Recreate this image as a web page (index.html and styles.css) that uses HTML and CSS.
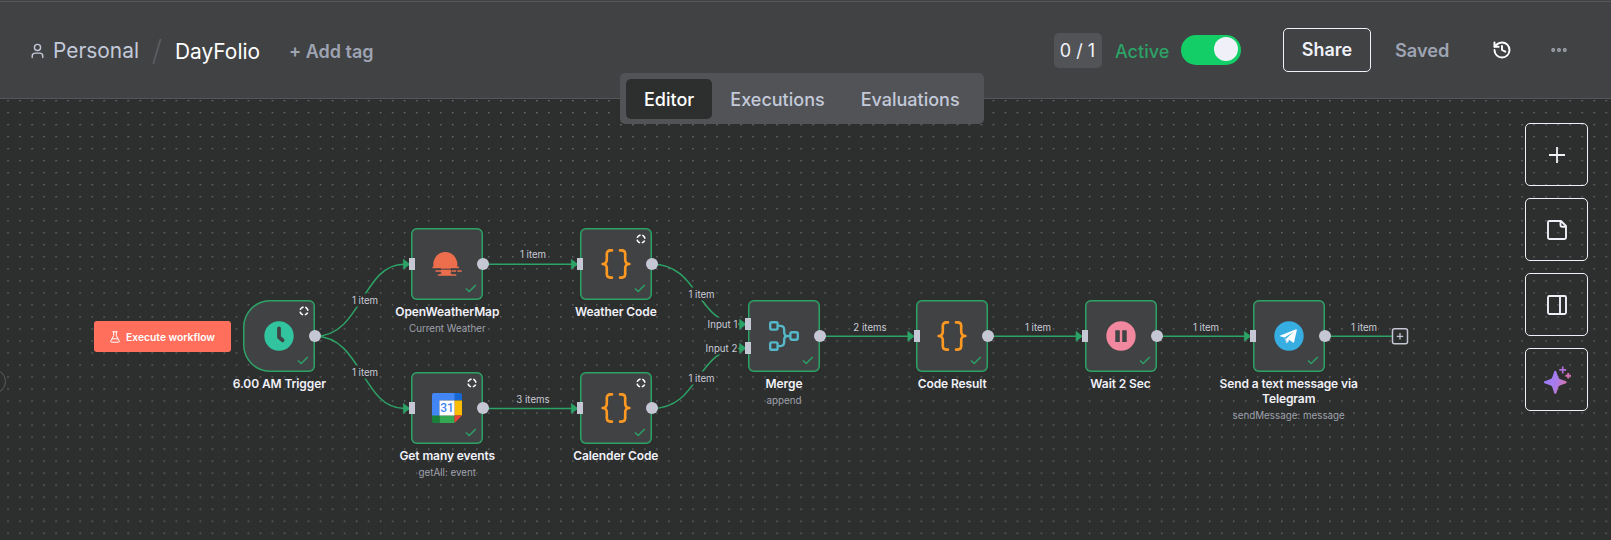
FILE: index.html
```html
<!DOCTYPE html>
<html lang="en">
<head>
<meta charset="utf-8">
<title>DayFolio</title>
<link rel="stylesheet" href="styles.css">
</head>
<body>
<svg class="defs" width="0" height="0">
  <defs>
    <symbol id="check" viewBox="0 0 12 9"><path d="M1 4.6 4.2 7.6 10.8 1" fill="none" stroke="#2ca266" stroke-width="1.4"/></symbol>
    <symbol id="pin" viewBox="0 0 10 10"><circle cx="5" cy="5" r="3.9" fill="none" stroke="#fff" stroke-width="1.6" stroke-dasharray="4.5 1.626" stroke-dashoffset="2.25" transform="rotate(45 5 5)"/></symbol>
    <symbol id="braces" viewBox="0 0 30 30"><g fill="none" stroke="#ff9922" stroke-width="2.6" stroke-linecap="round" stroke-linejoin="round"><path d="M11 1.4H9.4Q5.8 1.4 5.8 5v5.6Q5.8 15 1.6 15q4.2 0 4.2 4.4V25q0 3.600 3.600 3.600H11"/><path d="M19 1.400h1.600q3.600 0 3.600 3.600v5.600q0 4.400 4.200 4.400-4.200 0-4.200 4.400V25q0 3.600-3.600 3.600H19"/></g></symbol>
  </defs>
</svg>
<div class="app">
  <header class="header">
    <div class="crumbs">
      <svg class="user" viewBox="0 0 14 16"><g fill="none" stroke="#c3c9d9" stroke-width="1.5" stroke-linecap="round"><circle cx="7" cy="4.200" r="3.300"/><path d="M1.300 15v-1.400q0-3.300 3.400-3.300h4.600q3.400 0 3.400 3.300V15"/></g></svg>
      <span class="project">Personal</span>
      <svg class="slash" viewBox="0 0 10 27"><path d="M1.200 26 8.600 1" stroke="#5b5c60" stroke-width="1.800"/></svg>
      <span class="name">DayFolio</span>
      <span class="add-tag">+ Add tag</span>
    </div>
    <div class="actions">
      <span class="count">0 / 1</span>
      <span class="active-label">Active</span>
      <span class="toggle"><span class="knob"></span></span>
      <button class="share">Share</button>
      <span class="saved">Saved</span>
      <svg class="history" viewBox="0 0 24 24"><g fill="none" stroke="#fff" stroke-width="2.300" stroke-linecap="round" stroke-linejoin="round"><path d="M3 12a9 9 0 1 0 9-9 9.750 9.750 0 0 0-6.740 2.740L3 8"/><path d="M3 3v5h5"/><path d="M12 7v5l4 2"/></g></svg>
      <svg class="more" viewBox="0 0 16 6"><g fill="#77797f" stroke="#a3a7b3" stroke-width="1.100"><circle cx="2.200" cy="3" r="1.400"/><circle cx="8" cy="3" r="1.400"/><circle cx="13.800" cy="3" r="1.400"/></g></svg>
    </div>
    <nav class="tabs">
      <span class="tab selected">Editor</span>
      <span class="tab">Executions</span>
      <span class="tab">Evaluations</span>
    </nav>
  </header>
  <main class="canvas">
    <svg class="edges" viewBox="0 99 1611 441">
      <defs>
        <pattern id="dots" x="7.300" y="100" width="12.016" height="12.016" patternUnits="userSpaceOnUse"><circle cx=".8" cy=".7" r=".75" fill="#747778"/></pattern>
      </defs>
      <rect y="99" width="1611" height="441" fill="url(#dots)"/>
      <circle cx="-6.500" cy="381.500" r="12" fill="none" stroke="#5a5b5e"/>
      <g fill="none" stroke="#2ca266" stroke-width="1.500">
        <path d="M315 336.300C362 336.300 362 264.200 404 264.200"/>
        <path d="M315 336.300C362 336.300 362 408.400 404 408.400"/>
        <path d="M483 264.200H573M483 408.400H573"/>
        <path d="M652 264.200C700 264.200 696 324.300 741 324.300"/>
        <path d="M652 408.400C700 408.400 696 348.300 741 348.300"/>
        <path d="M820 336.300H910M988 336.300H1078M1157 336.300H1247M1325 336.300H1392"/>
      </g>
      <g fill="#2ca266" stroke="#2ca266" stroke-width=".6" stroke-linejoin="round">
        <path d="M403.300 259.200v10l6.500-5zM403.300 403.400v10l6.500-5zM571.300 259.200v10l6.500-5zM571.300 403.400v10l6.500-5zM739.600 319.300v10l6.500-5zM739.600 343.300v10l6.500-5zM907.800 331.300v10l6.500-5zM1076 331.300v10l6.500-5zM1244.300 331.300v10l6.500-5z"/>
      </g>
      <g fill="none" stroke="#c5c8d4"><rect x="1392.500" y="328.800" width="15" height="15" rx="2" fill="#2d2e2e" stroke-width="1.500"/><path d="M1396.800 336.300h6.400M1400 333.100v6.400" stroke-width="1.200"/></g>
    </svg>

    <span class="edge-label" style="left:365px;top:300px">1 item</span>
    <span class="edge-label" style="left:365px;top:372px">1 item</span>
    <span class="edge-label" style="left:533px;top:253.500px">1 item</span>
    <span class="edge-label" style="left:533px;top:398.500px">3 items</span>
    <span class="edge-label" style="left:701.500px;top:293.500px">1 item</span>
    <span class="edge-label" style="left:701.500px;top:377.500px">1 item</span>
    <span class="edge-label" style="left:722.500px;top:324px">Input 1</span>
    <span class="edge-label" style="left:721.500px;top:348px">Input 2</span>
    <span class="edge-label" style="left:870px;top:326.500px">2 items</span>
    <span class="edge-label" style="left:1038px;top:326.500px">1 item</span>
    <span class="edge-label" style="left:1206px;top:326.500px">1 item</span>
    <span class="edge-label" style="left:1364px;top:326.500px">1 item</span>

    <button class="execute">
      <svg viewBox="0 0 10 12"><g fill="none" stroke="#fff" stroke-width="1" stroke-linecap="round" stroke-linejoin="round"><path d="M2.800.8h4.400M3.700.8v3.800L.8 10q-.5 1.200.8 1.200h6.800q1.300 0 .8-1.200L6.300 4.600V.8M2.200 7.800h5.600"/></g></svg>
      Execute workflow
    </button>

    <section class="node" style="left:243.300px;top:300.300px">
      <div class="box trigger"><svg class="pin"><use href="#pin"/></svg>
        <svg class="icon" viewBox="0 0 30 30"><circle cx="15" cy="15" r="14.700" fill="#31c49f"/><path d="M15 7.500v8.800l3.600 3" fill="none" stroke="#414244" stroke-width="3.800" stroke-linecap="round" stroke-linejoin="round"/></svg>
        <svg class="check"><use href="#check"/></svg><i class="out"></i></div>
      <h2>6.00 AM Trigger</h2>
    </section>

    <section class="node" style="left:411.300px;top:228.200px">
      <div class="box"><i class="in"></i>
        <svg class="icon" viewBox="0 0 30 30"><path d="M1.800 18.500a12 12 0 1 1 23 0z" fill="#ec6e4c"/><path d="M9 18h9.500l1 8H8.500z" fill="#ec6e4c"/><path d="M1.200 18.400h25M4.200 22h14.500M20.800 22h2.600M26 22h3M6.600 26h17" fill="none" stroke="#ec6e4c" stroke-width="1.700" stroke-linecap="round"/><path d="M4 20.200h21M5 24h4.500M18.500 24h6" stroke="#414244" stroke-width="1"/></svg>
        <svg class="check"><use href="#check"/></svg><i class="out"></i></div>
      <h2>OpenWeatherMap</h2><p>Current Weather</p>
    </section>

    <section class="node" style="left:411.300px;top:372.400px">
      <div class="box"><i class="in"></i><svg class="pin"><use href="#pin"/></svg>
        <svg class="icon" viewBox="0 0 30 30"><path d="M2 0h21v7.500H7.500V23H0V2Q0 0 2 0z" fill="#4285f4"/><path d="M22.500 0H28q2 0 2 2v5.500h-7.500z" fill="#1967d2"/><path d="M22.500 7.500H30v15h-7.500z" fill="#fbbc04"/><path d="M7.500 22.500h15V30h-15z" fill="#34a853"/><path d="M0 22.500h7.500V30H2q-2 0-2-2z" fill="#188038"/><path d="M22.500 22.500H30L22.500 30z" fill="#ea4335"/><path d="M7.500 7.500h15v15h-15z" fill="#fff"/><text x="15.100" y="19.300" class="day">31</text></svg>
        <svg class="check"><use href="#check"/></svg><i class="out"></i></div>
      <h2>Get many events</h2><p>getAll: event</p>
    </section>

    <section class="node" style="left:579.800px;top:228.200px">
      <div class="box"><i class="in"></i><svg class="pin"><use href="#pin"/></svg><svg class="icon"><use href="#braces"/></svg><svg class="check"><use href="#check"/></svg><i class="out"></i></div>
      <h2>Weather Code</h2>
    </section>

    <section class="node" style="left:579.800px;top:372.400px">
      <div class="box"><i class="in"></i><svg class="pin"><use href="#pin"/></svg><svg class="icon"><use href="#braces"/></svg><svg class="check"><use href="#check"/></svg><i class="out"></i></div>
      <h2>Calender Code</h2>
    </section>

    <section class="node" style="left:748px;top:300.300px">
      <div class="box"><i class="in first"></i><i class="in second"></i>
        <svg class="icon" viewBox="0 0 30 30"><g fill="none" stroke="#54b8c9" stroke-width="2.400"><rect x="1.200" y="1.200" width="7.400" height="7.400" rx="1.600"/><rect x="1.200" y="21.400" width="7.400" height="7.400" rx="1.600"/><rect x="21.400" y="11.300" width="7.400" height="7.400" rx="1.600"/><path d="M8.500 4.900h2.700q4 0 4 4v2.300q0 3.800 3.600 3.800h2.700M8.500 25.100h2.700q4 0 4-4v-2.300q0-3.800 3.600-3.800"/></g></svg>
        <svg class="check"><use href="#check"/></svg><i class="out"></i></div>
      <h2>Merge</h2><p>append</p>
    </section>

    <section class="node" style="left:916.200px;top:300.300px">
      <div class="box"><i class="in"></i><svg class="icon"><use href="#braces"/></svg><svg class="check"><use href="#check"/></svg><i class="out"></i></div>
      <h2>Code Result</h2>
    </section>

    <section class="node" style="left:1084.500px;top:300.300px">
      <div class="box"><i class="in"></i>
        <svg class="icon" viewBox="0 0 30 30"><circle cx="15" cy="15" r="14.700" fill="#f1889f"/><path d="M9.300 9.300h4.500v11.600H9.300zM16.200 9.300h4.500v11.600h-4.500z" fill="#414244"/></svg>
        <svg class="check"><use href="#check"/></svg><i class="out"></i></div>
      <h2>Wait 2 Sec</h2>
    </section>

    <section class="node" style="left:1252.700px;top:300.300px">
      <div class="box"><i class="in"></i>
        <svg class="icon" viewBox="0 0 30 30"><circle cx="15" cy="15" r="14.700" fill="#37aee2"/><path d="M10.600 16.800 12.200 22q.5.500 1-.1l2.300-2.300z" fill="#c8daea"/><path d="M5.800 14.700 22 8.300q1-.2.800.9L20.100 21q-.3 1-1.200.5l-4-3-2.200 2.700-.2-3.900 7-6.400-8.900 5.600-4.600-1.300q-.7-.2-.2-.5z" fill="#fff"/></svg>
        <svg class="check"><use href="#check"/></svg><i class="out"></i></div>
      <h2>Send a text message via Telegram</h2><p>sendMessage: message</p>
    </section>

    <aside class="tools">
      <button class="tool"><svg viewBox="0 0 24 24"><path d="M12 4v16M4 12h16" fill="none" stroke="#f0f1f8" stroke-width="1.800"/></svg></button>
      <button class="tool"><svg viewBox="0 0 24 24"><path d="M16 3H4.500Q3 3 3 4.500v15Q3 21 4.500 21h15q1.500 0 1.500-1.500V8zM15.500 3v4Q15.500 8.800 17.300 8.800H21" fill="none" stroke="#f0f1f8" stroke-width="1.900" stroke-linejoin="round"/></svg></button>
      <button class="tool"><svg viewBox="0 0 24 24"><g fill="none" stroke="#f0f1f8" stroke-width="1.900"><rect x="3" y="3" width="18" height="18" rx="1.500"/><path d="M15 3v18"/></g></svg></button>
      <button class="tool"><svg class="spark" viewBox="0 0 28 28"><defs><linearGradient id="ai" gradientUnits="userSpaceOnUse" x1="4" y1="10" x2="27" y2="19"><stop offset="0" stop-color="#9b7bf7"/><stop offset=".45" stop-color="#a97bea"/><stop offset="1" stop-color="#e8708e"/></linearGradient></defs><path d="M11.300 5.300Q12.300 4 13.300 5.300L15.200 11q.5 1.800 2.300 2.300l5.600 2q1.200 1 0 2l-5.600 1.900q-1.800.5-2.300 2.300l-1.900 5.800q-1 1.200-2 0l-1.900-5.800q-.5-1.800-2.300-2.300l-5.600-1.900q-1.200-1 0-2l5.600-2q1.800-.5 2.300-2.300z" fill="url(#ai)"/><path d="M19.700.4v7M16.200 3.900h7" stroke="#b06fd8" stroke-width="1.700"/><path d="M25.200 6.900v5.600M22.400 9.700H28" stroke="#d56fb0" stroke-width="1.900"/></svg></button>
    </aside>
  </main>
</div>
</body>
</html>
```
FILE: styles.css
```css
* { box-sizing: border-box; }
html { height: 540px; }
body { margin: 0; height: 540px; background: #2d2e2e; font-family: Inter, "Liberation Sans", sans-serif; overflow: hidden; }
button { font: inherit; margin: 0; padding: 0; }
.defs { position: absolute; }
.app { position: relative; width: 1611px; height: 540px; overflow: hidden; }

.header { position: relative; z-index: 2; height: 99px; display: flex; justify-content: space-between; align-items: center; padding: 1px 44px 0 31px; background: #414244; border-bottom: 1px solid #555659; }
.header::before { content: ""; position: absolute; left: 0; right: 0; top: 1px; height: 1px; background: #555659; }
.crumbs, .actions { display: flex; align-items: center; white-space: nowrap; }
.user { width: 13px; height: 16px; margin: 3px 9px 0 0; }
.project { width: 85px; margin-top: 2px; font-size: 20.900px; color: #c3c9d9; }
.slash { width: 10px; height: 27px; margin: 4px 13px 0 14px; }
.name { width: 86px; margin-top: 3px; font-size: 20.900px; color: #fff; }
.add-tag { margin: 3px 0 0 28px; font-size: 18px; font-weight: 600; color: #9ea4b3; }

.count { width: 48px; height: 35px; margin-top: 2px; padding-bottom: 1px; display: flex; align-items: center; justify-content: center; border-radius: 5px; background: #525356; color: #f0f1f8; font-size: 18px; }
.active-label { width: 54px; margin: 3px 12px 0 13.500px; font-size: 18px; font-weight: 500; color: #2ca266; }
.toggle { width: 60px; height: 30px; margin-top: 1px; padding: 2px 3px; display: flex; justify-content: flex-end; border-radius: 15px; background: #13ce66; }
.knob { width: 24px; height: 24px; border-radius: 50%; background: #f0f1f8; }
.share { width: 88px; height: 44px; margin: 1px 24px 0 42px; padding-bottom: 1px; border: 1px solid #f0f1f8; border-radius: 5px; background: none; color: #f0f1f8; font-size: 18px; font-weight: 600; }
.saved { width: 55px; font-size: 18.200px; font-weight: 600; color: #9ea4b3; }
.history { width: 20px; height: 20px; margin: 1px 0 0 42px; }
.more { width: 16px; height: 6px; margin: 1px 0 0 39px; }

.tabs { position: absolute; left: 620px; top: 73px; width: 364px; height: 51px; display: flex; padding: 6px 6px 5px; border-radius: 5px; background: #525356; }
.tab { padding: 0 18px; line-height: 41px; font-size: 18px; font-weight: 500; color: #c3c9d9; border-radius: 5px; }
.selected { background: #2d2e2e; color: #fff; }

.canvas { height: 441px; }
.edges { display: block; width: 1611px; height: 441px; }
.edge-label { position: absolute; transform: translate(-50%, -50%); padding: 0 1px; line-height: 13px; font-size: 9.700px; white-space: nowrap; color: #c9ccd6; background: #2d2e2e; }

.execute { position: absolute; left: 94px; top: 321px; width: 137px; height: 31px; display: flex; align-items: center; justify-content: center; gap: 6px; border: 0; border-radius: 3px; background: #ff6f5c; color: #fff; font-size: 10.300px; font-weight: 600; white-space: nowrap; }
.execute svg { width: 10px; height: 12px; }

.node { position: absolute; width: 72px; display: flex; flex-direction: column; align-items: center; }
.box { position: relative; width: 72px; height: 72px; flex: none; display: flex; align-items: center; justify-content: center; box-shadow: inset 0 0 0 1.500px #2ca266; border-radius: 6px; background: #414244; }
.trigger { border-radius: 27px 6px 6px 27px; }
.icon { width: 30px; height: 30px; }
.day { font: 500 12px Roboto, sans-serif; fill: #4285f4; text-anchor: middle; }
.pin { position: absolute; right: 6px; top: 6px; width: 10px; height: 10px; }
.check { position: absolute; right: 6px; bottom: 7px; width: 12px; height: 9px; }
.in { position: absolute; left: -2.700px; top: 30px; width: 6px; height: 12px; background: #c5c8d4; }
.first { top: 18px; }
.second { top: 42px; }
.out { position: absolute; right: -6px; top: 30px; width: 12px; height: 12px; border-radius: 50%; background: #c5c8d4; }
.node h2 { width: 150px; margin: 4px 0 0; text-align: center; font-size: 12px; line-height: 15px; font-weight: 600; letter-spacing: -.1px; color: #f0f1f8; }
.node p { margin: 3px 0 0; font-size: 9.800px; line-height: 13px; white-space: nowrap; color: #9ea1ab; }

.tools { position: absolute; left: 1525px; top: 123px; display: flex; flex-direction: column; gap: 12px; }
.tool { width: 63px; height: 63px; display: flex; align-items: center; justify-content: center; border: 1px solid #f0f1f8; border-radius: 5px; background: none; }
.tool svg { width: 24px; height: 24px; }
.tool .spark { width: 28px; height: 28px; }
```
